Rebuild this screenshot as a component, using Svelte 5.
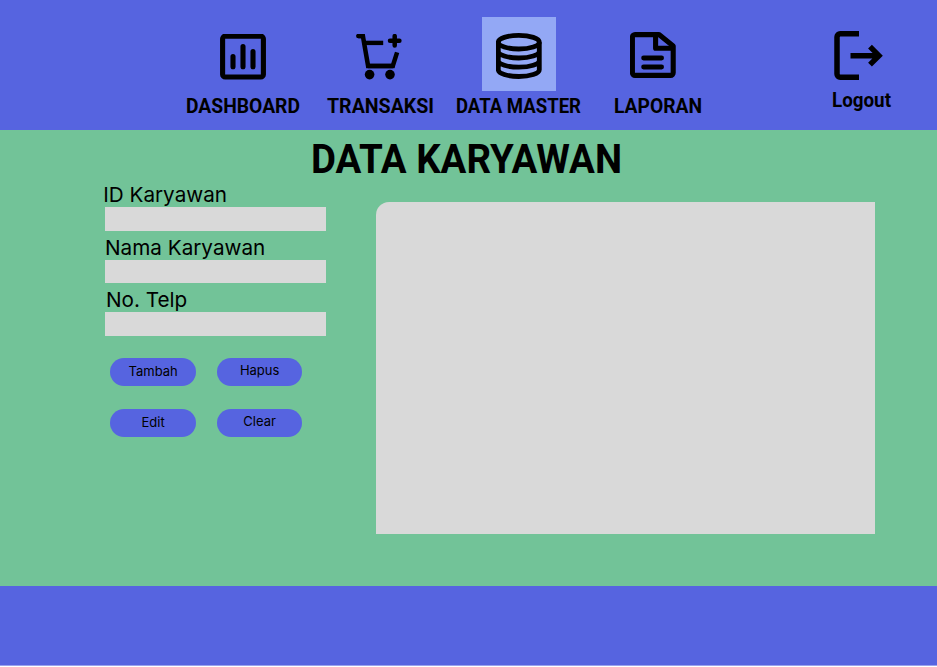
<script>
  const menu = [
    { label: 'DASHBOARD', icon: 'chart', width: 114 },
    { label: 'TRANSAKSI', icon: 'cart', width: 107 },
    { label: 'DATA MASTER', icon: 'database', width: 125, active: true },
    { label: 'LAPORAN', icon: 'document', width: 88 }
  ];
  const fields = [
    { id: 'id', label: 'ID Karyawan', indent: 0 },
    { id: 'nama', label: 'Nama Karyawan', indent: 1.8 },
    { id: 'telp', label: 'No. Telp', indent: 2.8 }
  ];
  const actions = ['Tambah', 'Hapus', 'Edit', 'Clear'];
</script>

{#snippet condensed(text, width, size, height)}
  <svg class="condensed" {width} {height} aria-label={text}>
    <text x="0" y={size * 0.82} font-size={size} textLength={width} lengthAdjust="spacingAndGlyphs">{text}</text>
  </svg>
{/snippet}

<div class="page">
  <header>
    <nav>
      {#each menu as item}
        <a class="item {item.icon}" href="#{item.icon}">
          <span class="tile" class:active={item.active}>
            <svg class="icon" width="46" height="46" viewBox="0 0 46 46">
              {#if item.icon === 'chart'}
                <rect x="2.6" y="2.2" width="40.8" height="40.8" rx="2.6" />
                <path d="M13 22.6v10.2M23 12.6v20.2M33 17.6v15.2" stroke-linecap="round" />
              {:else if item.icon === 'cart'}
                <path d="M2.3 2.1h4.6l5.2 29.8h24.7l4.3-13.5" stroke-width="4.5" />
                <path d="M2.3 2.1h4.6M12.3 31.9h24.3" stroke-width="4.5" stroke-linecap="round" stroke-linejoin="round" />
                <path d="M8.5 8.9h18.7" stroke-width="4.4" />
                <path d="M38.7 2.1v9.4M34 6.8h9.4" stroke-width="4.5" stroke-linecap="round" />
                <circle class="solid" cx="13.6" cy="40.6" r="4.8" />
                <circle class="solid" cx="34" cy="40.6" r="4.8" />
              {:else if item.icon === 'database'}
                <ellipse cx="22.8" cy="9.2" rx="20.5" ry="6.8" stroke-width="4.8" />
                <path d="M2.3 9.2v27.6c0 3.7 9.2 6.7 20.5 6.7s20.5-3 20.5-6.7V9.2M2.3 18.2c0 3.8 9.2 6.8 20.5 6.8s20.5-3 20.5-6.8M2.3 27.4c0 3.8 9.2 6.8 20.5 6.8s20.5-3 20.5-6.8" stroke-width="4.8" />
              {:else}
                <path d="M5 2.6h24L43.2 14v26.8a2.6 2.6 0 0 1-2.6 2.6H5a2.6 2.6 0 0 1-2.6-2.6V5.2A2.6 2.6 0 0 1 5 2.6Z" stroke-linejoin="round" />
                <path d="M25.6 3v13.2h17.5" stroke-linejoin="round" />
                <path d="M13.6 26h18M13.6 35h18" stroke-width="4.8" stroke-linecap="round" />
              {/if}
            </svg>
          </span>
          {@render condensed(item.label, item.width, 21, 26)}
        </a>
      {/each}
    </nav>
    <a class="logout" href="#logout">
      <svg class="icon" width="50" height="50" viewBox="0 0 50 50">
        <path d="M25 2.8H6.2a3.2 3.2 0 0 0-3.2 3.2v37a3.2 3.2 0 0 0 3.2 3.2H25" stroke-width="5.5" />
        <path d="M16.5 24.7h28M36 15.7l9 9-9 9" stroke-width="5.4" />
      </svg>
      {@render condensed('Logout', 59, 21, 26)}
    </a>
  </header>

  <main>
    <h1>{@render condensed('DATA KARYAWAN', 311, 41.5, 48)}</h1>
    <div class="content">
      <form onsubmit={(e) => e.preventDefault()}>
        {#each fields as field}
          <div class="field">
            <label for={field.id} style="padding-left: {field.indent}px">{field.label}</label>
            <input id={field.id} />
          </div>
        {/each}
        <div class="actions">
          {#each actions as action}
            <button type="button" class={action.toLowerCase()}>{action}</button>
          {/each}
        </div>
      </form>
      <section class="table"></section>
    </div>
  </main>
  <footer></footer>
</div>

<style>
  :global(body) { margin: 0; background: #fff; }
  .page { height: 666px; display: flex; flex-direction: column; font-family: Inter, sans-serif; color: #000; }
  header { box-sizing: border-box; height: 130px; background: #5664e0; display: flex; justify-content: space-between; padding: 17px 46px 0 186px; }
  nav { display: flex; }
  .item { display: flex; flex-direction: column; align-items: center; color: #000; text-decoration: none; }
  .cart { margin-left: 27px; }
  .database { margin-left: 22px; }
  .document { margin-left: 33px; }
  .tile { box-sizing: border-box; width: 74px; height: 74px; display: flex; align-items: center; justify-content: center; margin-bottom: 5px; padding-top: 5px; }
  .tile.active { background: #93a8f5; }
  .cart .tile { padding-right: 3px; }
  .database .tile { padding-top: 4px; }
  .document .tile { padding: 2px 11px 0 0; }
  .icon { display: block; flex: none; fill: none; stroke: #000; stroke-width: 5.1; }
  .solid { fill: #000; stroke: none; }
  .condensed { display: block; overflow: visible; font-family: Roboto, sans-serif; font-weight: 700; }
  .logout { color: #000; display: flex; flex-direction: column; padding-top: 13.6px; text-decoration: none; }
  .logout .icon { margin: 0 0 9px 2px; }
  main { height: 455.5px; flex: none; background: #72c398; }
  h1 { margin: 0; height: 53px; padding: 9.3px 0 0 311px; box-sizing: border-box; }
  .content { display: flex; align-items: flex-start; padding-left: 103.2px; }
  form { width: 273px; flex: none; }
  .field { height: 52.6px; display: flex; flex-direction: column; }
  label { font-size: 20.7px; line-height: 24.6px; height: 24.3px; white-space: nowrap; }
  input { margin: 0 0 0 1.8px; padding: 0; width: 221px; height: 23.5px; border: 0; border-radius: 0; background: #d9d9d9; }
  .actions { display: grid; grid-template-columns: 85.5px 85.5px; gap: 22.8px 21px; padding: 17.3px 0 0 7.2px; }
  button { box-sizing: border-box; height: 28px; border: 0; border-radius: 14px; padding: 0 0 2px; background: #5664e0; color: #000; font: 13px/16px Inter, sans-serif; }
  .clear { position: relative; top: 0.6px; padding-bottom: 4.4px; }
  .hapus { padding-bottom: 4px; }
  .table { width: 499px; height: 331.5px; margin-top: 19.2px; background: #d9d9d9; border-top-left-radius: 13px; }
  footer { flex: 1; background: #5664e0; border-bottom: 1px solid #9aa2ed; }
</style>
